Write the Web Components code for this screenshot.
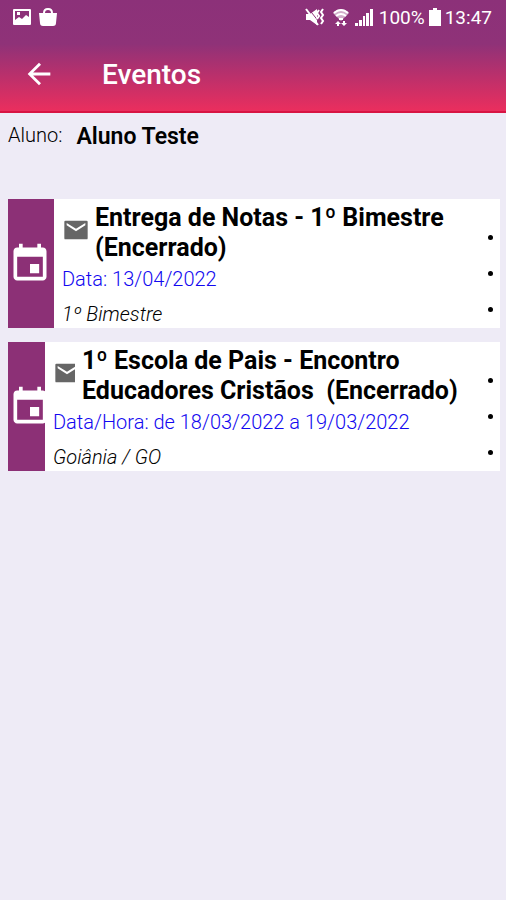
<!DOCTYPE html>
<html lang="pt-BR">
<head>
<meta charset="utf-8">
<meta name="viewport" content="width=device-width, initial-scale=1">
<title>Eventos</title>
<style>
    body {
        margin: 0;
        min-height: 100vh;
        background: #eeebf6;
        color: #000;
        font-family: Roboto, "Liberation Sans", sans-serif;
    }
</style>
</head>
<body>
<events-page>
    <student-label name="Aluno Teste"></student-label>
    <event-card heading="Entrega de Notas - 1º Bimestre (Encerrado)" date="Data: 13/04/2022" place="1º Bimestre"></event-card>
    <event-card compact heading="1º Escola de Pais - Encontro Educadores Cristãos&nbsp; (Encerrado)" date="Data/Hora: de 18/03/2022 a 19/03/2022" place="Goiânia / GO"></event-card>
</events-page>

<script>
class StatusBar extends HTMLElement {
    constructor() {
        super();
        this.attachShadow({ mode: 'open' });
        this.shadowRoot.innerHTML = `
            <style>
                :host {
                    display: flex;
                    align-items: center;
                    justify-content: space-between;
                    height: 36px;
                    padding: 0 14px 0 12px;
                    color: #fff;
                    font-size: 19px;
                    line-height: 24px;
                }
                div {
                    display: flex;
                    align-items: center;
                }
                .left { gap: 6px; }
                .right { gap: 4px; }
                svg {
                    display: block;
                    fill: currentColor;
                }
                .wifi { margin: 0 2px 0 4px; }
            </style>
            <div class="left">
                <svg width="20" height="20" viewBox="0 0 20 20"><path fill-rule="evenodd" d="M2 1h16q1 0 1 1v14q0 1-1 1H2q-1 0-1-1V2q0-1 1-1zm1 2v9l4-3 3 2 4-4 3 2V3zM5 4h3v3H5z"/></svg>
                <svg width="20" height="20" viewBox="0 0 20 20"><path d="M1 5h4q0-5 5-5t5 5h4l-1 10q0 3-3 3H5q-3 0-3-3zm6 0h6q0-3-3-3T7 5z" fill-rule="evenodd"/></svg>
            </div>
            <div class="right">
                <svg width="20" height="20" viewBox="0 0 20 20">
                    <path d="M1 6h4l7-5v16l-7-5H1z"/>
                    <path d="M3 0l11 14" stroke="#8c3179"/>
                    <path d="M1 1l12 16" fill="none" stroke="#fff" stroke-width="2"/>
                    <path d="M14 2l-2 3 2 3-2 3M18 1l-2 3 2 3-2 3 2 3-2 3" fill="none" stroke="#fff" stroke-width="2"/>
                </svg>
                <svg class="wifi" width="16" height="20" viewBox="0 0 16 20">
                    <path d="M0 5q8-8 16 0l-8 8z" opacity=".6"/>
                    <path d="M1 5q7-6 14 0M3 8q5-4 10 0M6 11h4" fill="none" stroke="#fff" stroke-width="2"/>
                    <path d="M5 13l3 3H6v2H4v-2H2zM11 18l-3-3h2v-2h2v2h2z"/>
                </svg>
                <svg width="20" height="20" viewBox="0 0 20 20"><path d="M0 15h3v3H0zM4 12h3v6H4zM8 8h2v10H8zM11 5h3v13h-3zM15 1h3v17h-3z"/></svg>
                <span>100%</span>
                <svg width="12" height="20" viewBox="0 0 12 20"><path d="M4 0h4v2h4v16H0V2h4z"/></svg>
                <span>13:47</span>
            </div>
        `;
    }
}

class AppHeader extends HTMLElement {
    constructor() {
        super();
        this.attachShadow({ mode: 'open' });
        this.shadowRoot.innerHTML = `
            <style>
                :host {
                    display: block;
                    color: #fff;
                    background: linear-gradient(#8c3179 0, #8f3278 44px, #e92e5e 110px);
                    border-bottom: 2px solid #d81443;
                }
                nav {
                    display: flex;
                    align-items: center;
                    gap: 46px;
                    height: 75px;
                    padding: 0 22px;
                }
                button {
                    width: 34px;
                    height: 34px;
                    padding: 0;
                    border: 0;
                    background: none;
                    color: inherit;
                }
                svg {
                    display: block;
                    width: 34px;
                    height: 34px;
                    fill: currentColor;
                }
                h1 {
                    margin: 0;
                    padding-top: 2px;
                    font-size: 28px;
                    line-height: 32px;
                    font-weight: 500;
                }
            </style>
            <status-bar></status-bar>
            <nav>
                <button type="button" aria-label="Voltar">
                    <svg viewBox="0 0 24 24"><path d="M20 11H7.830l5.590-5.590L12 4l-8 8 8 8 1.410-1.410L7.830 13H20z"/></svg>
                </button>
                <h1><slot></slot></h1>
            </nav>
        `;
    }
}

class StudentLabel extends HTMLElement {
    constructor() {
        super();
        this.attachShadow({ mode: 'open' });
        this.shadowRoot.innerHTML = `
            <style>
                :host {
                    display: flex;
                    gap: 14px;
                    height: 76px;
                    line-height: 28px;
                }
                span { font-size: 20px; line-height: 24px; font-weight: 350; }
                strong { font-size: 23px; font-weight: 600; }
            </style>
            <span>Aluno:</span>
            <strong></strong>
        `;
    }

    connectedCallback() {
        this.shadowRoot.querySelector('strong').textContent = this.getAttribute('name');
    }
}

class EventCard extends HTMLElement {
    constructor() {
        super();
        this.attachShadow({ mode: 'open' });
        this.shadowRoot.innerHTML = `
            <style>
                :host {
                    --stripe: 46px;
                    --mail: 26px;
                    display: flex;
                    min-height: 128px;
                    margin-bottom: 14px;
                    background: #fff;
                }
                :host([compact]) {
                    --stripe: 37px;
                    --mail: 22px;
                }
                .stripe {
                    display: flex;
                    align-items: center;
                    flex: none;
                    width: var(--stripe);
                    overflow: hidden;
                    background: #8c3076;
                }
                svg {
                    display: block;
                    flex: none;
                }
                .stripe svg {
                    width: 44px;
                    height: 44px;
                    fill: #fff;
                }
                .body {
                    flex: 1;
                    min-width: 0;
                    padding: 4px 0 0 8px;
                }
                .title {
                    display: flex;
                    gap: 7px;
                }
                .mail {
                    flex: none;
                    width: var(--mail);
                    margin-top: 13px;
                    overflow: hidden;
                }
                .mail svg {
                    width: 28px;
                    height: 28px;
                    fill: #666;
                }
                h2, p {
                    margin: 0;
                }
                h2 {
                    font-size: 25px;
                    line-height: 30px;
                    font-weight: 700;
                }
                p {
                    font-size: 20px;
                    line-height: 32px;
                    font-weight: 350;
                }
                .date { color: #1208f0; }
                .place {
                    margin-top: 5px;
                    line-height: 28px;
                    font-style: italic;
                }
                button {
                    display: flex;
                    flex-direction: column;
                    align-items: center;
                    justify-content: flex-end;
                    flex: none;
                    gap: 31px;
                    width: 20px;
                    padding: 0 0 16px;
                    border: 0;
                    background: none;
                }
                i {
                    width: 5px;
                    height: 5px;
                    border-radius: 50%;
                    background: #000;
                }
            </style>
            <div class="stripe">
                <svg viewBox="0 0 24 24"><path d="M17 12h-5v5h5v-5zM16 1v2H8V1H6v2H5c-1.110 0-2 .9-2 2v14c0 1.100.890 2 2 2h14c1.100 0 2-.9 2-2V5c0-1.100-.9-2-2-2h-1V1h-2zm3 18H5V8h14v11z"/></svg>
            </div>
            <div class="body">
                <div class="title">
                    <div class="mail">
                        <svg viewBox="0 0 24 24"><path d="M21 4H3q-1 0-1 1v14q0 1 1 1h18q1 0 1-1V5q0-1-1-1zm-1 4l-8 5-8-5V6l8 5 8-5v2z"/></svg>
                    </div>
                    <h2></h2>
                </div>
                <p class="date"></p>
                <p class="place"></p>
            </div>
            <button type="button" aria-label="Mais opções"><i></i><i></i><i></i></button>
        `;
    }

    connectedCallback() {
        this.shadowRoot.querySelector('h2').textContent = this.getAttribute('heading');
        this.shadowRoot.querySelector('.date').textContent = this.getAttribute('date');
        this.shadowRoot.querySelector('.place').textContent = this.getAttribute('place');
    }
}

class EventsPage extends HTMLElement {
    constructor() {
        super();
        this.attachShadow({ mode: 'open' });
        this.shadowRoot.innerHTML = `
            <style>
                :host { display: block; }
                main { padding: 10px 6px 0 8px; }
            </style>
            <app-header>Eventos</app-header>
            <main><slot></slot></main>
        `;
    }
}

customElements.define('status-bar', StatusBar);
customElements.define('app-header', AppHeader);
customElements.define('student-label', StudentLabel);
customElements.define('event-card', EventCard);
customElements.define('events-page', EventsPage);
</script>
</body>
</html>
